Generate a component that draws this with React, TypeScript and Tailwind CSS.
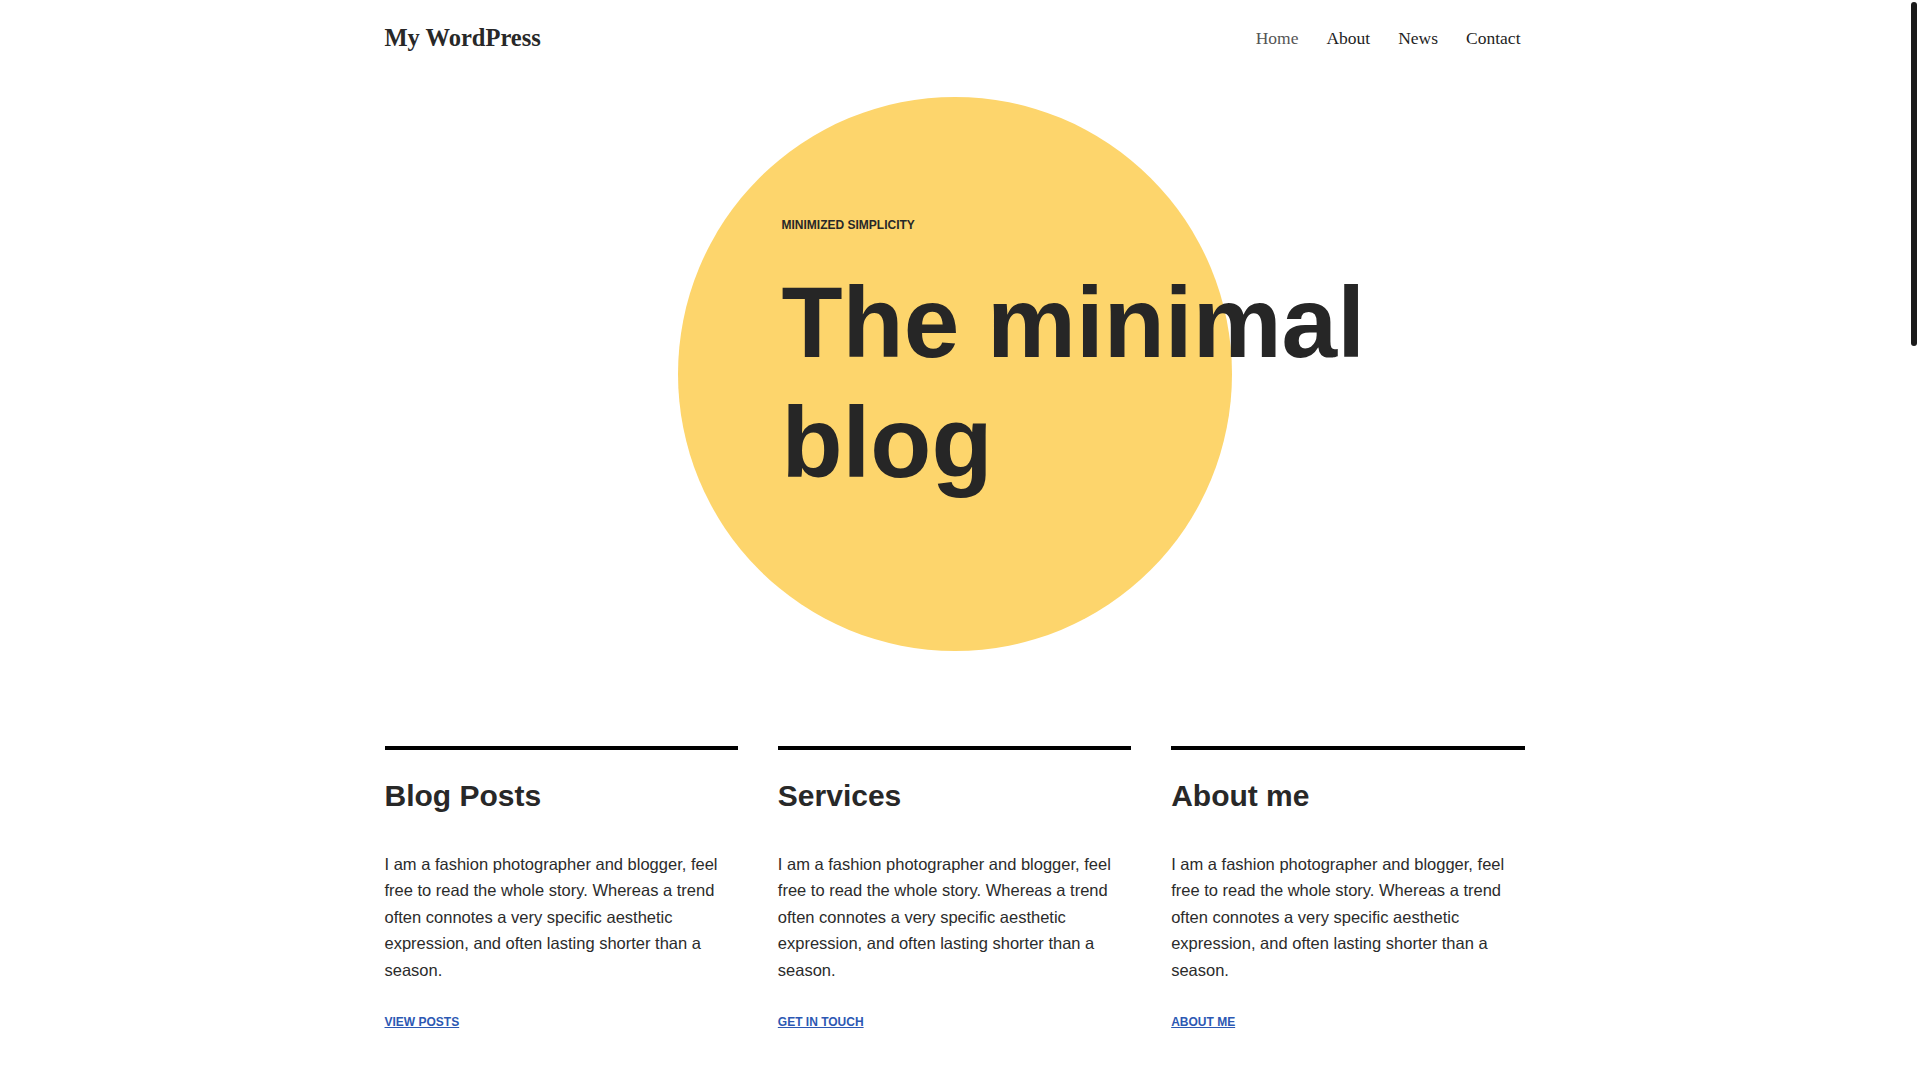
const columns = [
  { title: "Blog Posts", link: "View posts" },
  { title: "Services", link: "Get in touch" },
  { title: "About me", link: "About me" },
]

const navItems = ["Home", "About", "News", "Contact"]

const body =
  "I am a fashion photographer and blogger, feel free to read the whole story. Whereas a trend often connotes a very specific aesthetic expression, and often lasting shorter than a season."

export default function App() {
  return (
    <div className="min-h-[3370px] bg-white pr-[11px] text-[#282828] font-['Liberation_Sans',Arial,sans-serif]">
      {/* scrollbar thumb as drawn in the screenshot */}
      <div className="fixed right-[3px] top-[2px] h-[344px] w-[6px] rounded-full bg-[#1a1a1a]" />

      {/* Header */}
      <header className="mx-auto flex h-[76px] w-[1140px] items-center justify-between">
        <a href="#" className="font-['Liberation_Serif','Times_New_Roman',serif] text-[24.5px] font-bold leading-[1.2] text-[#282828]">
          My WordPress
        </a>
        <nav className="flex gap-[28px] pt-[1px] pr-[4px] font-['Liberation_Serif','Times_New_Roman',serif] text-[17.5px] leading-[1.2]">
          {navItems.map((item, i) => (
            <a key={item} href="#" className={i === 0 ? "text-[#555555]" : "text-[#1e1e1e]"}>
              {item}
            </a>
          ))}
        </nav>
      </header>

      {/* Hero */}
      <section className="mt-[21px] flex justify-center">
        <div className="h-[554px] w-[554px] shrink-0 rounded-full bg-[#fdd56c] pl-[104px] pt-[119px]">
          <div className="w-[640px]">
            <p className="text-[12px] font-bold uppercase leading-[18px] text-[#282828]">Minimized simplicity</p>
            <h1 className="mt-[28px] text-[100px] font-bold leading-[120px] text-[#262626]">The minimal blog</h1>
          </div>
        </div>
      </section>

      {/* Columns */}
      <section className="mx-auto mt-[95px] grid w-[1140px] grid-cols-3 gap-[40px]">
        {columns.map((col) => (
          <div key={col.title} className="border-t-4 border-black">
            <h2 className="mt-[28px] text-[30px] font-bold leading-[1.2] text-[#282828]">{col.title}</h2>
            <p className="mt-[37px] text-[16.5px] leading-[1.6] text-[#2b2b2b]">{body}</p>
            <a href="#" className="mt-[30px] block text-[12px] font-bold uppercase leading-[18px] text-[#2c58b3] underline">
              {col.link}
            </a>
          </div>
        ))}
      </section>
    </div>
  )
}
